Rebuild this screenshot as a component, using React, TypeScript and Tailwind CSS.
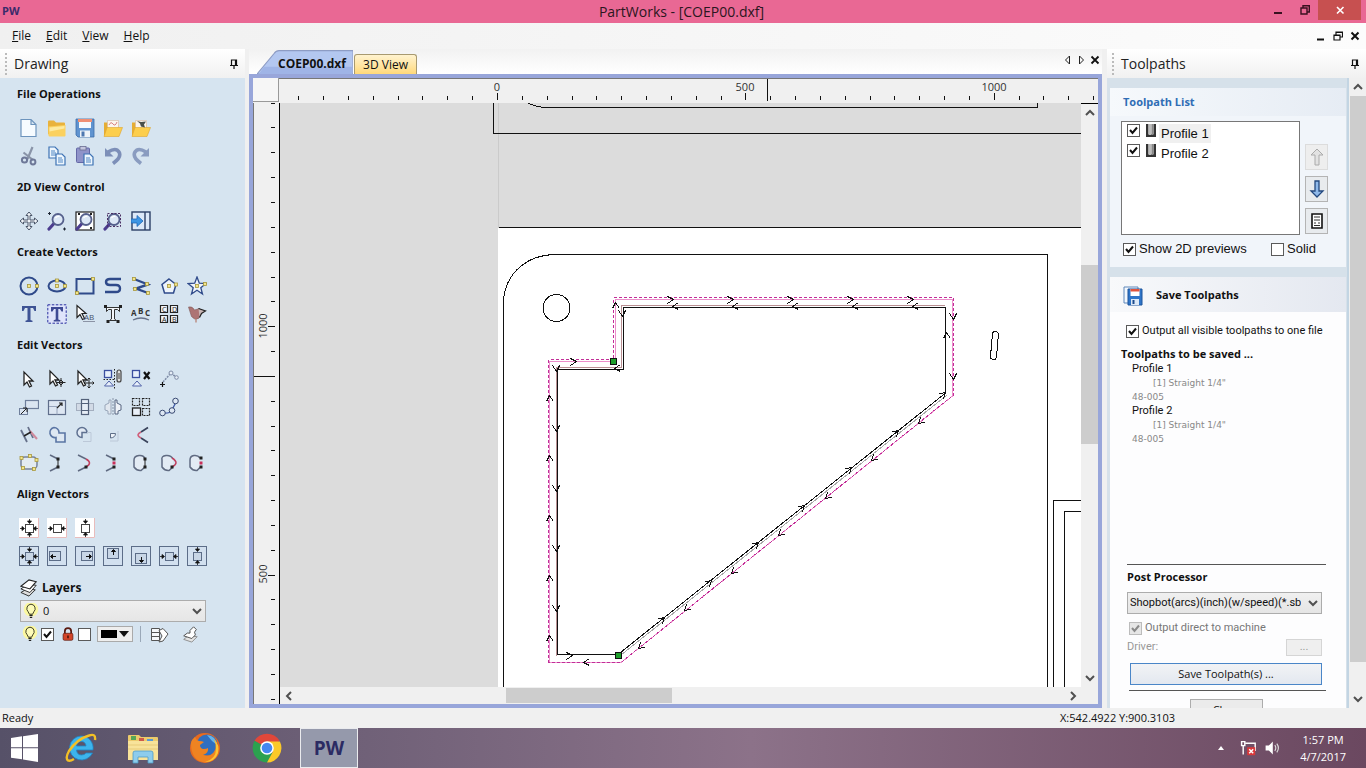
import { useState } from 'react'
import type { ReactNode } from 'react'
import clsx from 'clsx'

interface Tool {
  name: string
  art: ReactNode
}

interface Toolpath {
  id: number
  name: string
  tool: string
  code: string
}

const NAVY = '#2f4a8a'
const INK = '#1d2433'
const SLATE = '#6f7f9c'

const TOOLPATHS: Toolpath[] = [
  { id: 1, name: 'Profile 1', tool: '[1] Straight 1/4"', code: '48-005' },
  { id: 2, name: 'Profile 2', tool: '[1] Straight 1/4"', code: '48-005' },
]

/* ---------- icon pieces ---------- */

const cursor = (
  <path d="M3 2v13l3-3 2.500 5 2-1-2.500-5h4z" fill="#fff" stroke="#222" strokeWidth="1.300" />
)

const folder = (
  <>
    <path d="M1 3.500q0-1 1-1h5l2 2h8q1 0 1 1v11H2q-1 0-1-1z" fill="#e9b23c" />
    <path d="M1.500 8.500l17-1.500v10.500q0 1-1 1h-15q-1 0-1-1z" fill="#fbd160" />
    <path d="M2.500 9.500l15-1.500v2.500l-15 3z" fill="#fdeaa0" />
  </>
)

const openFolder = (
  <>
    <path d="M1 4.500h5l1.500 2h8v11H1z" fill="#e5ad35" />
    <path d="M4.500 2.500h11v9h-11z" fill="#fbf5ee" stroke="#d8b9a0" strokeWidth=".6" />
    <path d="M4 9.500h15.500L16 18.500H1z" fill="#fcce4d" stroke="#dfa52e" strokeWidth=".6" />
  </>
)

const page = (x: number, y: number) => (
  <>
    <path d={`M${x} ${y}h6l3 3v8h-9z`} fill="#eef6fd" stroke="#3d72b4" strokeWidth="1.200" />
    <path d={`M${x + 2} ${y + 4}h4M${x + 2} ${y + 6}h5M${x + 2} ${y + 8}h5`} stroke="#4f86c4" strokeWidth="1" />
  </>
)

const lens = (
  <>
    <path d="M7 12.500L2 18" stroke="#4c3d8f" strokeWidth="3.200" strokeLinecap="round" />
    <circle cx="11" cy="8.500" r="5.500" fill="#dde8f6" stroke="#56608c" strokeWidth="1.800" />
    <path d="M8.500 7q1.500-2 4-1.500" stroke="#fff" strokeWidth="1.300" fill="none" />
  </>
)

const node = (x: number, y: number) => (
  <rect x={x - 1.5} y={y - 1.5} width="3" height="3" fill="#f3e58a" stroke="#a7973e" strokeWidth=".8" />
)

const dot = (x: number, y: number, fill = '#222') => <rect x={x - 1.5} y={y - 1.5} width="3" height="3" fill={fill} />

const arrowsH = (
  <path d="M1 10.500h3M19 10.500h-3M3 8.500l2.500 2L3 12.500zM17 8.500l-2.500 2 2.500 2z" fill="#111" stroke="#111" strokeWidth=".8" />
)
const arrowsV = (
  <path d="M10.500 1v3M10.500 19v-3M8.500 3l2 2.500 2-2.500zM8.500 17l2-2.500 2 2.500z" fill="#111" stroke="#111" strokeWidth=".8" />
)

const pinkTile = (
  <>
    <rect width="20" height="20" fill="#fff" />
    <path d="M19.500 0v19.500H0" stroke="#e9bcbc" fill="none" />
    <rect x="6.500" y="6.500" width="8" height="8" fill="#fff" stroke="#444" />
  </>
)

const frame = <rect x=".5" y=".5" width="19" height="19" fill="#d2e0ef" stroke="#5c6d88" />

/* ---------- tool palettes ---------- */

const FILE_TOOLS: Tool[] = [
  {
    name: 'New',
    art: <path d="M2 1.500h10l5 5v12H2zM12 1.500v5h5" fill="#f6fbff" stroke="#6d94bd" strokeWidth="1.200" />,
  },
  { name: 'Open', art: folder },
  {
    name: 'Save',
    art: (
      <>
        <path d="M1 1h18v18H3l-2-2z" fill="#5f93d0" stroke="#3d6ca8" strokeWidth=".8" />
        <rect x="4" y="1" width="12" height="9" fill="#f5f9fd" />
        <rect x="3" y="1" width="14" height="3" fill="#ef8f74" />
        <rect x="5" y="12.500" width="10" height="6.500" fill="#eef3f9" />
        <rect x="6.500" y="13.500" width="3" height="5" fill="#4e78b0" />
      </>
    ),
  },
  {
    name: 'Import vectors',
    art: (
      <>
        {openFolder}
        <path d="M6 7q2-4 4-1t4-2" stroke="#d98484" fill="none" />
      </>
    ),
  },
  {
    name: 'Import bitmap',
    art: (
      <>
        {openFolder}
        <path d="M6 3l4 1 5-.5-2 3 1 3-4-1-1-3z" fill="#4a4f4a" />
      </>
    ),
  },
  {
    name: 'Cut',
    art: (
      <>
        <path d="M13.500 1L8.500 13M4.500 6.500L14 14" stroke="#8a94a8" strokeWidth="2.200" />
        <circle cx="5.500" cy="14" r="2.600" fill="none" stroke="#6e7898" strokeWidth="2" />
        <circle cx="14" cy="16" r="2.400" fill="none" stroke="#6e7898" strokeWidth="2" />
      </>
    ),
  },
  {
    name: 'Copy',
    art: (
      <>
        {page(2, 1)}
        {page(9, 8)}
      </>
    ),
  },
  {
    name: 'Paste',
    art: (
      <>
        <rect x="1.500" y="2" width="13" height="14.500" rx="1" fill="#8f93c9" stroke="#6468a6" />
        <rect x="5" y=".5" width="6" height="3.500" fill="#c4c6de" stroke="#6a6d92" strokeWidth=".8" />
        {page(9, 8)}
      </>
    ),
  },
  {
    name: 'Undo',
    art: (
      <>
        <path d="M5 6q8-5 11 0t-6 11.500" fill="none" stroke="#7d8fb8" strokeWidth="3.600" />
        <path d="M2 2v8.500h8.500z" fill="#7d8fb8" />
      </>
    ),
  },
  {
    name: 'Redo',
    art: (
      <>
        <path d="M15 6Q7 1 4 6t6 11.500" fill="none" stroke="#8a9cc0" strokeWidth="3.600" />
        <path d="M18 2v8.500H9.500z" fill="#8a9cc0" />
      </>
    ),
  },
]

const VIEW_TOOLS: Tool[] = [
  {
    name: 'Pan',
    art: (
      <path
        d="M10 1l3 3.500h-2v4.500h4.500V7l3.500 3-3.500 3v-2H11v4.500h2L10 19l-3-3.500h2V11H4.500v2L1 10l3.500-3v2H9V4.500H7z"
        fill="#f2f5f9"
        stroke="#4a5568"
        strokeWidth="1"
      />
    ),
  },
  {
    name: 'Zoom in',
    art: (
      <>
        {lens}
        <path d="M1 2.500h3M2.500 1v3M16 18h3M17.500 16.500v3" stroke={INK} />
      </>
    ),
  },
  {
    name: 'Zoom to fit',
    art: (
      <>
        <rect x="1" y="1" width="18" height="18" fill="#fff" stroke="#222" strokeWidth="1.200" />
        {lens}
        <path d="M3 3h2M15 3h2M15 17h2" stroke="#222" strokeWidth="2" />
      </>
    ),
  },
  {
    name: 'Zoom selected',
    art: (
      <>
        {lens}
        <rect x="4.500" y="2.500" width="13" height="13" fill="none" stroke="#4a2f63" strokeDasharray="2 1.500" />
      </>
    ),
  },
  {
    name: 'Switch view',
    art: (
      <>
        <rect x="1" y="1" width="18" height="18" fill="#dce8f8" stroke="#2b3f66" strokeWidth="1.400" />
        <path d="M14 1v18" stroke="#2b3f66" strokeWidth="1.400" />
        <path d="M0 8h6V4.500l6 5.500-6 5.500V12H0z" fill="#3d95e4" stroke="#1f66b4" strokeWidth=".8" />
      </>
    ),
  },
]

const CREATE_TOOLS: Tool[] = [
  {
    name: 'Circle',
    art: (
      <>
        <circle cx="10" cy="10" r="8.500" fill="none" stroke={NAVY} strokeWidth="2" />
        {node(10, 10)}
        {node(18, 10)}
      </>
    ),
  },
  {
    name: 'Ellipse',
    art: (
      <>
        <ellipse cx="10" cy="10" rx="8.500" ry="5.500" fill="none" stroke={NAVY} strokeWidth="2" />
        {node(10, 10)}
        {node(18, 10)}
        {node(10, 4.500)}
      </>
    ),
  },
  {
    name: 'Rectangle',
    art: (
      <>
        <rect x="1.500" y="3" width="17" height="14.500" fill="none" stroke={NAVY} strokeWidth="2" />
        {node(18, 3)}
        {node(2, 17)}
      </>
    ),
  },
  {
    name: 'Polyline',
    art: <path d="M18 3H7q-4 0-4 3t4 3h6q4 0 4 3.500T13 16H2" fill="none" stroke={NAVY} strokeWidth="2.400" />,
  },
  {
    name: 'Arcs',
    art: (
      <>
        <path d="M3 3l14 5.500-12 4 12 4.500" fill="none" stroke={NAVY} strokeWidth="2.400" />
        {node(3, 3)}
        {node(16, 8)}
        {node(4, 13)}
        {node(17, 17)}
      </>
    ),
  },
  {
    name: 'Polygon',
    art: (
      <>
        <path d="M10 3l7 5.500L14.500 17h-9L3 8.500z" fill="#eef4fb" stroke={NAVY} strokeWidth="1.500" />
        {node(10, 10)}
        {node(17, 8.5)}
      </>
    ),
  },
  {
    name: 'Star',
    art: (
      <>
        <path d="M10 1l2.300 6.200 6.700.3-5.200 4.200L15.500 18 10 14.300 4.500 18l1.700-6.300L1 7.500l6.700-.3z" fill="#eef4fb" stroke={NAVY} strokeWidth="1.300" />
        {node(10, 10)}
        {node(18, 8)}
      </>
    ),
  },
  {
    name: 'Text',
    art: <path d="M3 2h14v5h-1.500L14 4h-2.500v12l2 .8V18h-7v-1.200l2-.8V4H6L4.500 7H3z" fill="#3e5394" />,
  },
  {
    name: 'Text in box',
    art: (
      <>
        <rect x=".8" y=".8" width="18.400" height="18.400" fill="#dfe4fb" stroke="#2a2fa0" strokeDasharray="2.500 1.500" />
        <path d="M4 3h12v4.500h-1.500L13 5h-1.700v10.500l2 .7v1.300H6.700v-1.300l2-.7V5H7L5.500 7.500H4z" fill="#3e4a94" />
      </>
    ),
  },
  {
    name: 'Edit text',
    art: (
      <>
        <path d="M2 1.500v12l3-3 2.500 5 2-1-2.500-5h4z" fill="#fff" stroke="#222" strokeWidth="1.200" />
        <text x="9" y="16" className="text-[8px]" fill="#44506a">AB</text>
        <path d="M8 17.500h12" stroke="#8b93a5" />
      </>
    ),
  },
  {
    name: 'Convert text',
    art: (
      <>
        <path d="M3.500 3.500h13v4l-2-2H11.500V15l2 1.500h-7L8.500 15V5.500h-3l-2 2z" fill="#f4f7fb" stroke="#333" />
        {dot(2.5, 2.5)}
        {dot(17.5, 2.5)}
        {dot(5, 17.5)}
        {dot(15, 17.5)}
      </>
    ),
  },
  {
    name: 'Text on curve',
    art: (
      <>
        <text x="0" y="12" className="text-[8px] font-bold" fill="#333">A</text>
        <text x="7" y="10" className="text-[8px] font-bold" fill="#333">B</text>
        <text x="14" y="12" className="text-[8px] font-bold" fill="#333">C</text>
        <path d="M2 16q8-4 16 0" fill="none" stroke="#66718a" strokeWidth="1.300" />
      </>
    ),
  },
  {
    name: 'Nesting',
    art: (
      <>
        <path d="M1.500 1.500h7v7h-7zM11.500 1.500h7v7h-7zM1.500 11.500h7v7h-7zM11.500 11.500h7v7h-7z" fill="#f3f6fa" stroke="#222" strokeWidth="1.200" />
        <text x="3" y="8" className="text-[7px]" fill="#222">C</text>
        <text x="13" y="8" className="text-[7px]" fill="#222">D</text>
        <text x="3" y="18" className="text-[7px]" fill="#222">A</text>
        <text x="13" y="18" className="text-[7px]" fill="#222">B</text>
      </>
    ),
  },
  {
    name: 'Trace bitmap',
    art: (
      <>
        <path d="M1.500 3q4-1 6 3l5-1.500 3 3-4 7q-4 2-7-2z" fill="#ad7474" stroke="#7e5a5a" strokeWidth=".6" />
        <path d="M11.500 4.500l7 2.500-4 2.500-2 4" fill="#c9b5b5" stroke="#222" strokeWidth="1.200" />
        <path d="M9 14v4.500" stroke="#b47a6c" strokeWidth="1.200" />
      </>
    ),
  },
]

const EDIT_TOOLS: Tool[][] = [
  [
    {
      name: 'Select',
      art: <g transform="translate(2 1)">{cursor}</g>,
    },
    {
      name: 'Node edit',
      art: (
        <>
          {cursor}
          <path d="M14 9v9M9.500 13.500h9M14 11l2.500 2.500L14 16l-2.500-2.500z" fill="#fff" stroke="#222" />
        </>
      ),
    },
    {
      name: 'Transform',
      art: (
        <>
          {cursor}
          <path d="M14 9v10M9 14h10M12.500 10.500L14 9l1.500 1.500M12.500 17.500L14 19l1.500-1.500M10.500 12.500L9 14l1.500 1.500M17.500 12.500L19 14l-1.500 1.500" fill="none" stroke="#222" />
        </>
      ),
    },
    {
      name: 'Group',
      art: (
        <>
          <rect x="1.500" y="1.500" width="7" height="7" fill="#e8f0fb" stroke="#3b4fa0" strokeWidth="1.300" />
          <path d="M6 12l4.500 5h-9z" fill="#e8f0fb" stroke="#5062a8" />
          <path d="M.5 10.500h11M11.500 0v20" stroke="#222" strokeDasharray="1.500 1.500" />
          <rect x="14" y="1" width="4" height="12" rx="2" fill="#ddd" stroke="#444" strokeWidth="1.200" />
          <path d="M16 4v6" stroke="#444" />
        </>
      ),
    },
    {
      name: 'Ungroup',
      art: (
        <>
          <rect x="1.500" y="1.500" width="7" height="7" fill="#e8f0fb" stroke="#3b4fa0" strokeWidth="1.300" />
          <path d="M6 12l4.500 5h-9z" fill="#e8f0fb" stroke="#5062a8" />
          <path d="M13 3l5.500 7M18.500 3L13 10" stroke="#111" strokeWidth="2.200" />
        </>
      ),
    },
    {
      name: 'Measure',
      art: (
        <>
          <path d="M1 15.500h5M3.500 13v5" stroke="#111" strokeWidth="1.200" />
          <path d="M4 13L12 4l6 5" fill="none" stroke="#7d8aa5" strokeWidth="1.500" strokeDasharray="2 1" />
          <circle cx="12" cy="4" r="2" fill="#e6edf6" stroke="#7d8aa5" />
          <circle cx="17.500" cy="8.500" r="1.800" fill="#e6edf6" stroke="#7d8aa5" />
        </>
      ),
    },
  ],
  [
    {
      name: 'Move',
      art: (
        <>
          <rect x="6.500" y="3.500" width="13" height="8" fill="#dbe5f1" stroke={SLATE} strokeWidth="1.200" />
          <rect x=".5" y="11.500" width="8" height="6" fill="#dbe5f1" stroke={SLATE} />
          <path d="M2 17L8 11M4 11h4v4" fill="none" stroke="#222" />
        </>
      ),
    },
    {
      name: 'Set size',
      art: (
        <>
          <rect x="1.500" y="3.500" width="17" height="14" fill="#dde6f2" stroke="#5f6e8b" strokeWidth="1.200" />
          <path d="M2 9.500h8v8" fill="none" stroke="#97a4bb" />
          <path d="M10 11l5-5M12 6h3v3" fill="none" stroke="#222" strokeWidth="1.200" />
        </>
      ),
    },
    {
      name: 'Rotate',
      art: (
        <>
          <rect x="1.500" y="6.500" width="17" height="7" fill="#d2dae6" stroke="#a3aebf" />
          <rect x="6.500" y="2.500" width="7" height="15" fill="#e6edf6" stroke="#526079" strokeWidth="1.200" />
          <path d="M7 6.500h6M7 13.500h6" stroke="#526079" />
        </>
      ),
    },
    {
      name: 'Mirror',
      art: (
        <>
          <path d="M8 3H6v3L2 8v5l3 1v3h3z" fill="#e1e7ef" stroke="#9aa7ba" />
          <path d="M12 3h2v3l4 2v5l-3 1v3h-3z" fill="#eef2f8" stroke="#566480" />
          <path d="M10 1v18" stroke="#8894a8" strokeDasharray="2 1" />
        </>
      ),
    },
    {
      name: 'Array copy',
      art: (
        <>
          <path d="M1.500 1.500h7v7h-7zM11.500 1.500h7v7h-7zM11.500 11.500h7v7h-7z" fill="none" stroke="#222" strokeDasharray="2 1" strokeWidth="1.200" />
          <rect x="1.500" y="11" width="8" height="7.500" fill="#eaf0f8" stroke="#222" strokeWidth="1.300" />
        </>
      ),
    },
    {
      name: 'Copy along vector',
      art: (
        <>
          <path d="M3 16q8 1 10-3l4-8" fill="none" stroke="#3d57a5" strokeWidth="1.300" />
          <circle cx="3.500" cy="16" r="2.800" fill="#dde7f3" stroke="#3a4a72" />
          <circle cx="13" cy="13.500" r="2.800" fill="#dde7f3" stroke="#3a4a72" />
          <circle cx="16.500" cy="4" r="2.800" fill="#dde7f3" stroke="#3a4a72" />
        </>
      ),
    },
  ],
  [
    {
      name: 'Offset',
      art: (
        <>
          <path d="M2 5l6 12M9 2l5 11" stroke="#66708a" strokeWidth="1.800" />
          <path d="M11 6l7 8" stroke="#cf8a9c" strokeWidth="2" />
          <path d="M5 11l7-4" stroke="#222" strokeWidth="1.500" />
        </>
      ),
    },
    {
      name: 'Weld',
      art: <path d="M7 2.500a5 5 0 0 1 5 5v.5h6v9h-9v-4.500A5 5 0 1 1 7 2.500z" fill="#dde7f2" stroke="#5a75a4" strokeWidth="1.600" />,
    },
    {
      name: 'Subtract',
      art: (
        <>
          <path d="M12 7.500A5 5 0 1 0 7 12.500V7.500z" fill="#e2eaf4" stroke="#5f7191" strokeWidth="1.500" />
          <path d="M12 7.500h4v9H8" fill="none" stroke="#bcc8d8" />
        </>
      ),
    },
    {
      name: 'Intersect',
      art: (
        <>
          <path d="M7.500 8.500h5q0 4-5 4.500z" fill="#eef3f9" stroke="#5f6f88" />
          <path d="M15 6v10H7" fill="none" stroke="#bcc8d8" />
        </>
      ),
    },
    {
      name: 'Fillet',
      art: (
        <>
          <path d="M17 2.500L10 7M17 17.500L10 13" stroke="#39425a" strokeWidth="1.700" />
          <path d="M10 7q-6 3 0 6" fill="none" stroke="#d0607c" strokeWidth="1.700" />
        </>
      ),
    },
  ],
  [
    {
      name: 'Fit curves',
      art: (
        <>
          <rect x="2" y="4" width="16" height="12" rx="4" fill="#e3ebf2" stroke="#77829a" strokeWidth="1.500" />
          {node(2.5, 5)}
          {node(11, 3)}
          {node(17.5, 7)}
          {node(4, 15)}
          {node(15, 16)}
        </>
      ),
    },
    {
      name: 'Join with line',
      art: (
        <>
          <path d="M3 2l8 4M3 18l8-4" stroke="#606b82" strokeWidth="1.500" />
          <path d="M11 6v8" stroke="#222" />
          {dot(11, 6)}
          {dot(11, 14)}
        </>
      ),
    },
    {
      name: 'Join with curve',
      art: (
        <>
          <path d="M3 2l8 4M3 18l8-4" stroke="#606b82" strokeWidth="1.500" />
          <path d="M11 6q7 4 0 8" fill="none" stroke="#c0405e" strokeWidth="1.500" />
          {dot(11, 14)}
        </>
      ),
    },
    {
      name: 'Join at point',
      art: (
        <>
          <path d="M3 2l8 4M3 18l8-4" stroke="#606b82" strokeWidth="1.500" />
          {dot(11, 6)}
          {dot(11, 10, '#c9305a')}
          {dot(11, 14)}
        </>
      ),
    },
    {
      name: 'Close with line',
      art: (
        <>
          <path d="M14 6Q13 2 8 2.500T3 7v7q3 4 7 3.500l4-3.500" fill="#e3ebf4" stroke="#606b82" strokeWidth="1.500" />
          <path d="M14 6v8" stroke="#222" />
          {dot(14, 6)}
          {dot(14, 14)}
        </>
      ),
    },
    {
      name: 'Close with curve',
      art: (
        <>
          <path d="M14 6Q12 2 7 2.500T3 7v7q3 4 7 3.500l4-3.500" fill="#e3ebf4" stroke="#606b82" strokeWidth="1.500" />
          <path d="M13 5q8 5 0 9" fill="none" stroke="#c0405e" strokeWidth="1.500" />
          {dot(13, 14)}
        </>
      ),
    },
    {
      name: 'Close at point',
      art: (
        <>
          <path d="M13 5Q11 2 7 2.500T3 7v7q3 4 7 3.500l3-3" fill="#e3ebf4" stroke="#606b82" strokeWidth="1.500" />
          {dot(14, 5)}
          {dot(14, 10, '#c9305a')}
          {dot(14, 14)}
        </>
      ),
    },
  ],
]

const ALIGN_TOOLS: Tool[][] = [
  [
    { name: 'Center both', art: <>{pinkTile}{arrowsH}{arrowsV}</> },
    { name: 'Center horizontally', art: <>{pinkTile}{arrowsH}</> },
    { name: 'Center vertically', art: <>{pinkTile}{arrowsV}</> },
  ],
  [
    { name: 'Center in material', art: <>{frame}<rect x="6.500" y="6.500" width="8" height="8" fill="#c8d6e6" stroke="#5c6d88" />{arrowsH}{arrowsV}</> },
    { name: 'Align left', art: <>{frame}<rect x="2.500" y="5.500" width="11" height="9" fill="#c8d6e6" stroke="#5c6d88" /><path d="M9 10.500H5M5.500 8.500l-2 2 2 2z" stroke="#111" fill="#111" /></> },
    { name: 'Align right', art: <>{frame}<rect x="6.500" y="5.500" width="11" height="9" fill="#c8d6e6" stroke="#5c6d88" /><path d="M11 10.500h4M14.500 8.500l2 2-2 2z" stroke="#111" fill="#111" /></> },
    { name: 'Align top', art: <>{frame}<rect x="4.500" y="2.500" width="11" height="10" fill="#c8d6e6" stroke="#5c6d88" /><path d="M10.500 9V5M8.500 5.500l2-2 2 2z" stroke="#111" fill="#111" /></> },
    { name: 'Align bottom', art: <>{frame}<rect x="4.500" y="7.500" width="11" height="10" fill="#c8d6e6" stroke="#5c6d88" /><path d="M10.500 11v4M8.500 14.500l2 2 2-2z" stroke="#111" fill="#111" /></> },
    { name: 'Align middle horizontally', art: <>{frame}<rect x="6.500" y="6.500" width="8" height="8" fill="#c8d6e6" stroke="#5c6d88" />{arrowsH}</> },
    { name: 'Align middle vertically', art: <>{frame}<rect x="6.500" y="6.500" width="8" height="8" fill="#c8d6e6" stroke="#5c6d88" />{arrowsV}</> },
  ],
]

/* ---------- small shared parts ---------- */

function Icon({ children, className = 'size-5' }: { children: ReactNode; className?: string }) {
  return (
    <svg viewBox="0 0 20 20" className={clsx('block shrink-0', className)} aria-hidden="true">
      {children}
    </svg>
  )
}

function Bulb() {
  return (
    <Icon className="size-4">
      <circle cx="10" cy="8" r="9" fill="#fbf8a0" />
      <path d="M10 1.500a5.500 5.500 0 0 1 3.500 9.500l-1.500 3H8l-1.500-3A5.500 5.500 0 0 1 10 1.500z" fill="#fdfbb8" stroke="#3a3a20" strokeWidth="1.200" />
      <path d="M8 15.500h4M8.500 18h3" stroke="#222" strokeWidth="1.800" />
    </Icon>
  )
}

function Pin() {
  return (
    <svg viewBox="0 0 10 10" className="block size-2.5" aria-hidden="true">
      <path d="M2.500 6V1h5v5M1 6.500h8M5 7v3M6.500 1v5" fill="none" stroke="#111" strokeWidth="1.200" />
    </svg>
  )
}

function Chevron({ d }: { d: string }) {
  return (
    <svg viewBox="0 0 10 10" className="size-2.5 shrink-0" aria-hidden="true">
      <path d={d} fill="none" stroke="#505050" strokeWidth="2" />
    </svg>
  )
}

function TabArrow({ d }: { d: string }) {
  return (
    <svg viewBox="0 0 10 10" className="size-2.5 shrink-0" aria-hidden="true">
      <path d={d} fill="none" stroke="#222" />
    </svg>
  )
}

const UP = 'M1 7l4-4 4 4'
const DOWN = 'M1 3l4 4 4-4'

interface CheckProps {
  id: string
  label?: string
  hiddenLabel?: string
  initial?: boolean
  disabled?: boolean
  className?: string
}

function Check({ id, label, hiddenLabel, initial = false, disabled = false, className = '' }: CheckProps) {
  const [on, setOn] = useState(initial)
  return (
    <div className={clsx('flex items-center gap-[3px]', className)}>
      <span className="relative block size-[13px] shrink-0">
        <input
          id={id}
          type="checkbox"
          checked={on}
          disabled={disabled}
          aria-label={hiddenLabel}
          onChange={(e) => setOn(e.target.checked)}
          className="block size-[13px] appearance-none border border-[#5a5a5a] bg-white disabled:border-[#bcbcbc] disabled:bg-[#e6e6e6]"
        />
        {on && (
          <svg viewBox="0 0 13 13" className="pointer-events-none absolute inset-0" aria-hidden="true">
            <path d="M3 6l2.500 3L10 3.500" fill="none" stroke={disabled ? '#8a8a8a' : '#111'} strokeWidth="2" />
          </svg>
        )}
      </span>
      {label && <label htmlFor={id} className="whitespace-nowrap">{label}</label>}
    </div>
  )
}

function Palette({ tools }: { tools: Tool[] }) {
  return (
    <div className="flex">
      {tools.map((tool) => (
        <button key={tool.name} type="button" title={tool.name} aria-label={tool.name} className="grid size-7 place-items-center">
          <Icon>{tool.art}</Icon>
        </button>
      ))}
    </div>
  )
}

function Section({ title, rows }: { title: string; rows: Tool[][] }) {
  return (
    <section>
      <h2 className="mb-2.5 pl-0.5 text-[11px] leading-5 font-bold">{title}</h2>
      {rows.map((tools) => (
        <Palette key={tools[0].name} tools={tools} />
      ))}
    </section>
  )
}

function PanelHeader({ title }: { title: string }) {
  return (
    <header className="flex h-[29px] shrink-0 items-center bg-linear-to-b from-white to-[#f1f1f1] pr-1.5 pl-[5px]">
      <span className="mr-[7px] h-[22px] border-l-2 border-dotted border-[#bbb]" />
      <h1 className="flex-1 text-[14px] text-[#222]">{title}</h1>
      <button type="button" aria-label={`Pin ${title}`}>
        <Pin />
      </button>
    </header>
  )
}

/* ---------- window chrome ---------- */

function TitleBar() {
  return (
    <div className="flex h-[23px] shrink-0 bg-[#e96894]">
      <div className="flex flex-1 items-center pl-0.5 text-[11px] font-bold text-[#3b2a6b]">PW</div>
      <div className="text-[14px] leading-[23px] text-[#2b1620]">PartWorks - [COEP00.dxf]</div>
      <div className="flex flex-1 items-start justify-end pr-[5px]">
        <button type="button" aria-label="Minimize" className="grid h-5 w-[26px] place-items-center">
          <svg viewBox="0 0 10 10" className="size-2.5"><path d="M1 8h8" stroke="#3a1020" strokeWidth="2" /></svg>
        </button>
        <button type="button" aria-label="Restore" className="grid h-5 w-[27px] place-items-center">
          <svg viewBox="0 0 10 10" className="size-2.5"><path d="M1 3h6v6H1zM3 3V.7h6.300V7H7" fill="none" stroke="#3a1020" strokeWidth="1.400" /></svg>
        </button>
        <button type="button" aria-label="Close" className="grid h-5 w-[43px] place-items-center bg-[#c75050]">
          <svg viewBox="0 0 10 10" className="size-2.5"><path d="M2 2l6.500 6.500M8.500 2L2 8.500" stroke="#fff" strokeWidth="1.600" /></svg>
        </button>
      </div>
    </div>
  )
}

function MenuBar() {
  return (
    <nav className="flex h-[26px] shrink-0 items-center bg-linear-to-r from-[#f0f0f0] to-[#fcfcfc] pr-1.5 pl-3 text-[12px]">
      <div className="flex flex-1 gap-[15px]">
        {['File', 'Edit', 'View', 'Help'].map((item) => (
          <button key={item} type="button">
            <span className="underline">{item[0]}</span>
            {item.slice(1)}
          </button>
        ))}
      </div>
      <div className="flex items-center gap-[7px]">
        <button type="button" aria-label="Minimize document">
          <svg viewBox="0 0 10 10" className="size-2.5"><path d="M1 8.500h7" stroke="#111" strokeWidth="2" /></svg>
        </button>
        <button type="button" aria-label="Restore document">
          <svg viewBox="0 0 10 10" className="size-2.5"><path d="M1 4h6v5H1zM3 4V1h6.500v5H7M1 4.500h6M3 1.500h6" fill="none" stroke="#111" strokeWidth="1.200" /></svg>
        </button>
        <button type="button" aria-label="Close document">
          <svg viewBox="0 0 10 10" className="size-2.5"><path d="M1.500 1.500l7 7M8.500 1.500l-7 7" stroke="#111" strokeWidth="2" /></svg>
        </button>
      </div>
    </nav>
  )
}

/* ---------- left panel ---------- */

function DrawingPanel() {
  return (
    <aside className="flex w-[249px] shrink-0 flex-col pr-1">
      <PanelHeader title="Drawing" />
      <div className="flex flex-1 flex-col gap-[7px] overflow-hidden bg-[#d6e4f0] pt-1.5 pl-[15px]">
        <Section title="File Operations" rows={[FILE_TOOLS.slice(0, 5), FILE_TOOLS.slice(5)]} />
        <Section title="2D View Control" rows={[VIEW_TOOLS]} />
        <Section title="Create Vectors" rows={[CREATE_TOOLS.slice(0, 7), CREATE_TOOLS.slice(7)]} />
        <Section title="Edit Vectors" rows={EDIT_TOOLS} />
        <Section title="Align Vectors" rows={ALIGN_TOOLS} />
        <section className="w-[191px] pl-[5px]">
          <h2 className="mb-px flex h-[22px] items-center gap-1 text-[12px] font-bold">
            <Icon className="size-[18px]">
              <path d="M1 15l7-4 9 1-7 7z" fill="#ddd" stroke="#222" />
              <path d="M1 11l8-5 9 1-7 8z" fill="#fff" stroke="#222" />
              <path d="M1 8l9-7 8 2-7 8z" fill="#fff" stroke="#222" strokeWidth="1.200" />
            </Icon>
            Layers
          </h2>
          <div className="relative h-[22px]">
            <select aria-label="Active layer" className="block h-full w-full appearance-none border border-[#acacac] bg-linear-to-b from-[#efefef] to-[#e6e6e6] pl-[22px] text-[11px]">
              <option>0</option>
            </select>
            <span className="pointer-events-none absolute inset-y-0 left-[3px] flex items-center"><Bulb /></span>
            <span className="pointer-events-none absolute inset-y-0 right-1 flex items-center"><Chevron d={DOWN} /></span>
          </div>
          <div className="mt-1 flex h-4 items-center pl-0.5">
            <Bulb />
            <Check id="layer-visible" hiddenLabel="Layer visible" initial className="ml-[3px]" />
            <Icon className="ml-[7px] size-3.5">
              <path d="M5.500 10V6a4.500 4.500 0 0 1 9 0v4" fill="none" stroke="#5b1a10" strokeWidth="2.500" />
              <rect x="3" y="9" width="14" height="10" rx="2" fill="#d3452a" stroke="#5b1a10" />
              <path d="M10 12v4" stroke="#3a0e08" strokeWidth="2" />
            </Icon>
            <Check id="layer-locked" hiddenLabel="Layer locked" className="ml-[3px]" />
            <button type="button" aria-label="Layer colour" className="ml-1.5 flex h-4 w-9 items-center justify-between border border-[#aaa] bg-[#eee] px-[3px]">
              <span className="h-2 w-4 bg-black" />
              <svg viewBox="0 0 10 10" className="size-2.5"><path d="M0 2h10L5 8z" fill="#111" /></svg>
            </button>
            <span className="mr-2 ml-[7px] h-4 shrink-0 border-l border-[#9aa8b8]" />
            <button type="button" aria-label="Layer manager" className="mr-3">
              <Icon>
                <path d="M2.500 4.500h8v12h-8zM3 8.500h7M3 12.500h7" fill="#f6f8fa" stroke="#555" />
                <path d="M10 6.500l4-2 5 5.500-5 7-4 1 3-6z" fill="#fff" stroke="#555" />
              </Icon>
            </button>
            <button type="button" aria-label="Move to layer">
              <Icon className="size-[18px]">
                <path d="M3 16l5-4 10 1-6 6z" fill="#e4e4e4" stroke="#888" />
                <path d="M3 12l4-3h3V6l4-4 3 3-2 3 1 3-4 4z" fill="#fff" stroke="#444" />
              </Icon>
            </button>
          </div>
        </section>
      </div>
    </aside>
  )
}

/* ---------- document window ---------- */

// One ruler step is 50 drawing units; 500 units take 248px on the sheet.
const STEPS = Array.from({ length: 64 }, (_, i) => i - 30)
const stepAt = (origin: number, i: number, sign: number) => Math.round(origin + sign * i * 24.84) + 0.5

function TopRuler() {
  return (
    <svg className="block h-6 w-full bg-[#f0f0f0]" aria-label="Horizontal ruler">
      <g transform="translate(-280 -78)" stroke="#111">
        {STEPS.map((i) => {
          const x = stepAt(497, i, 1)
          return <path key={i} d={i % 10 === 0 ? `M${x} 92v7` : `M${x} 95v4`} />
        })}
        <path d="M767.5 78v22" />
      </g>
      <g fill="#333" textAnchor="middle" className="text-[11px]">
        <text x="217" y="12">0</text>
        <text x="465" y="12">500</text>
        <text x="714" y="12">1000</text>
      </g>
    </svg>
  )
}

function SideRuler() {
  return (
    <svg className="block h-full w-6 shrink-0 bg-[#f0f0f0]" aria-label="Vertical ruler">
      <g transform="translate(-254 -103)" stroke="#111">
        {STEPS.map((i) => {
          const y = stepAt(823, i, -1)
          return <path key={i} d={i % 10 === 0 ? `M268 ${y}h7` : `M271 ${y}h4`} />
        })}
        <path d="M254 376.500h17" />
      </g>
      <g fill="#333" textAnchor="middle" className="text-[11px]">
        <text transform="translate(13 223) rotate(-90)">1000</text>
        <text transform="translate(13 471) rotate(-90)">500</text>
      </g>
    </svg>
  )
}

// tip x, tip y, heading in degrees
const ARROWS: [number, number, number][] = [
  [673, 299, 0], [733, 299, 0], [793, 299, 0], [853, 299, 0], [913, 299, 0],
  [672, 306, 180], [732, 306, 180], [792, 306, 180], [852, 306, 180], [912, 306, 180],
  [549, 395, 270], [549, 455, 270], [549, 515, 270], [549, 575, 270], [549, 635, 270],
  [556, 371, 90], [556, 431, 90], [556, 491, 90], [556, 551, 90], [556, 611, 90],
  [615, 302, 270], [622, 316, 90], [576, 361, 0], [614, 368, 180],
  [953, 319, 90], [953, 379, 90], [946, 332, 270],
  [945, 392, 321], [898, 430, 321], [851, 467, 321], [804, 505, 321], [758, 542, 321], [711, 580, 321], [664, 617, 321],
  [918, 423, 141], [871, 460, 141], [825, 498, 141], [778, 535, 141], [731, 573, 141], [684, 610, 141], [638, 648, 141],
  [572, 655, 0], [583, 662, 180],
]

function Sheet() {
  return (
    <svg className="block size-full bg-[#dcdcdc]" aria-label="Drawing canvas">
      <g transform="translate(-280 -103)" fill="none" stroke="#111" shapeRendering="crispEdges">
        <path d="M498 228h4000v4000H498z" fill="#fff" stroke="none" />
        <path d="M498.500 103v125" stroke="#cbcbcb" />
        <path d="M499 227.500h4000M493.500 103v30.500h4000M528 103q8 4 16 4.500H1037.500V103" />
        <path d="M503.500 4000V300C506 272 528 254.500 556 254.500H1047.500V4000" />
        <path d="M1053.500 4000V500.500H4000M1064.500 4000V511.500H4000" />
        <circle cx="556.500" cy="308" r="13.500" />
        <rect x="991.500" y="331.500" width="6" height="28" rx="3" transform="rotate(5 994 345)" />

        <path d="M556.500 655.500V367.500H621.500V305.500H944.500" stroke="#b98f92" />
        <path d="M947 395L621 655" stroke="#a9a9a9" />
        <path d="M557.500 654.500V369.500H623.500V307.500H945.500V393L618 654.500z" />
        <path d="M549.500 662V361.500H615.500V299.500H952.500V396L621 662.500H549" stroke="#ec8fcb" />
        <path d="M548.500 662.500V359.500H613.500V297.500H953.500V395L621 662.500z" stroke="#c22e98" strokeDasharray="3 2" />

        {ARROWS.map(([x, y, deg]) => (
          <path key={`${x}-${y}`} d="M-6-3L0 0l-6 4" transform={`translate(${x + 0.5} ${y + 0.5}) rotate(${deg})`} />
        ))}
        <path d="M610.500 358.500h6v6h-6zM615.500 652.500h6v6h-6z" fill="#1fa02c" />
      </g>
    </svg>
  )
}

function DocumentWindow() {
  return (
    <main className="flex min-w-0 flex-1 flex-col">
      <div className="flex h-[25px] shrink-0 items-end bg-linear-to-b from-[#f2f2f2] to-white pr-0.5 pl-2">
        <div className="relative w-24 text-center">
          <svg viewBox="0 0 96 20" preserveAspectRatio="none" className="absolute inset-0 size-full" aria-hidden="true">
            <path d="M0 20L17 3q2-2.500 5-2.500h74V20z" fill="#b3c7f0" stroke="#8d9cc4" />
            <path d="M7 14h88v6H2z" fill="#9fb4e6" />
          </svg>
          <button type="button" className="relative pl-3.5 text-[12px] leading-5 font-bold">COEP00.dxf</button>
        </div>
        <button type="button" className="ml-px h-5 w-[63px] rounded-t-[3px] border border-b-0 border-[#a89a70] bg-linear-to-b from-[#fff3cf] to-[#ffd979] text-[12px] leading-[18px]">
          3D View
        </button>
        <div className="ml-auto flex h-full items-center gap-1 pb-1">
          <button type="button" aria-label="Previous tab"><TabArrow d="M7.500 1v8L3.500 5z" /></button>
          <button type="button" aria-label="Next tab"><TabArrow d="M3.500 1v8l4-4z" /></button>
          <button type="button" aria-label="Close tab">
            <svg viewBox="0 0 10 10" className="size-2.5"><path d="M1.500 1.500l7 7M8.500 1.500l-7 7" stroke="#111" strokeWidth="1.800" /></svg>
          </button>
        </div>
      </div>

      <div className="flex min-h-0 flex-1 flex-col border-4 border-[#98a6da] bg-[#f0f0f0]">
        <div className="flex h-[26px] shrink-0">
          <div className="h-6 w-[26px] shrink-0 border-r border-b border-[#999] bg-[#f6f6f6]" />
          <div className="min-w-0 flex-1 border-t border-b border-t-[#777] border-b-black pl-px">
            <TopRuler />
          </div>
        </div>
        <div className="-mt-px flex min-h-0 flex-1">
          <div className="flex w-[26px] shrink-0 border-l border-[#777]">
            <SideRuler />
          </div>
          <div className="flex min-w-0 flex-1 flex-col border-t border-l border-black">
            <div className="-mt-px flex min-h-0 flex-1 border-t border-black">
              <div className="-mt-px min-w-0 flex-1">
                <Sheet />
              </div>
              <div className="flex w-[17px] shrink-0 flex-col items-center bg-[#f0f0f0] py-1">
                <Chevron d={UP} />
                <div className="h-[147px] shrink-0" />
                <div className="h-[179px] w-full shrink-0 bg-[#cdcdcd]" />
                <div className="flex-1" />
                <Chevron d={DOWN} />
              </div>
            </div>
            <div className="flex h-[17px] shrink-0 items-center pr-5 pl-1">
              <Chevron d="M7 1L3 5l4 4" />
              <div className="ml-[212px] h-[15px] w-[166px] bg-[#cdcdcd]" />
              <div className="flex-1" />
              <Chevron d="M3 1l4 4-4 4" />
            </div>
          </div>
        </div>
      </div>
    </main>
  )
}

/* ---------- right panel ---------- */

function ListButton({ label, disabled = false, children }: { label: string; disabled?: boolean; children: ReactNode }) {
  return (
    <button
      type="button"
      aria-label={label}
      disabled={disabled}
      className="grid h-[26px] w-[23px] place-items-center border border-[#b4b4b4] bg-[#e8ebee] disabled:border-[#dcdcdc] disabled:bg-[#eeeeee]"
    >
      <Icon>{children}</Icon>
    </button>
  )
}

function ToolpathList() {
  const [selected, setSelected] = useState(1)
  return (
    <section className="shrink-0 bg-[#f1f5fa] pb-2.5 font-['Liberation_Sans',sans-serif] text-[13px]">
      <h2 className="h-7 bg-linear-to-r from-[#f6f9fc] to-[#e6ecf4] pl-[13px] font-['Open_Sans',sans-serif] text-[11px] leading-7 font-bold text-[#2f6db5]">
        Toolpath List
      </h2>
      <div className="mt-[5px] flex gap-[5px] pl-[11px]">
        <ul className="h-[114px] w-[179px] border border-[#777] bg-white pt-0.5">
          {TOOLPATHS.map((path) => (
            <li key={path.id} className="flex h-5 items-start pl-[5px]">
              <Check id={`path-${path.id}`} hiddenLabel={`Show ${path.name}`} initial />
              <svg viewBox="0 0 10 14" className="mr-[3px] ml-1.5 h-3.5 w-2.5" aria-hidden="true">
                <path d="M0 0v13h10V0H7.500v10h-5V0z" fill="#333" />
                <path d="M2.500 0h3v11h-3z" fill="#bbb" />
                <path d="M5.500 0h2v11h-2z" fill="#888" />
              </svg>
              <button type="button" onClick={() => setSelected(path.id)} className={clsx('px-0.5 leading-[19px]', selected === path.id && 'bg-[#f0f0f0]')}>
                {path.name}
              </button>
            </li>
          ))}
        </ul>
        <div className="flex flex-col gap-1.5 pt-[23px]">
          <ListButton label="Move up" disabled>
            <path d="M10 2l6 6h-4v10H8V8H4z" fill="#e2e2e2" stroke="#aaa" />
          </ListButton>
          <ListButton label="Move down">
            <path d="M10 18l6-6h-4V2H8v10H4z" fill="#8fb9ea" stroke="#24497f" strokeWidth="1.300" />
          </ListButton>
          <ListButton label="Toolpath summary">
            <path d="M5 3h10v14H5z" fill="#fff" stroke="#111" strokeWidth="1.600" />
            <path d="M7 6h6M7 9h6M7 12h2M11 12h2M7 14.500h6" stroke="#333" />
          </ListButton>
        </div>
      </div>
      <div className="mt-1.5 flex h-4 items-center pr-[30px] pl-[13px]">
        <Check id="show-2d" label="Show 2D previews" initial />
        <Check id="solid" label="Solid" className="ml-auto" />
      </div>
    </section>
  )
}

function SaveToolpaths() {
  return (
    <section className="min-h-0 flex-1 overflow-hidden bg-[#fdfdfe] text-[11px]">
      <h2 className="flex h-[35px] items-center gap-[13px] bg-linear-to-r from-[#f8f9fb] to-[#e4e8f0] pt-0.5 pl-[13px] font-bold">
        <Icon>
          <path d="M1 1h14v16H1z" fill="#f4f8fd" stroke="#5f88bb" />
          <path d="M5 3h14v16H5z" fill="#2f75c8" stroke="#1c559c" />
          <path d="M7.500 3h9v7h-9z" fill="#fff" />
          <path d="M7.500 3h9v2.500h-9z" fill="#e0533c" />
          <path d="M8 13h8v6H8z" fill="#dce8f6" />
          <path d="M9.500 14h2v4h-2z" fill="#1c4b8c" />
        </Icon>
        Save Toolpaths
      </h2>
      <Check id="one-file" label="Output all visible toolpaths to one file" initial className="mt-2.5 h-[18px] pl-4 font-['Roboto',sans-serif]" />
      <h3 className="mt-1.5 pl-[11px] leading-4 font-bold">Toolpaths to be saved ...</h3>
      <ul className="h-[202px] pl-[22px] font-['Roboto',sans-serif] leading-[14px]">
        {TOOLPATHS.map((path) => (
          <li key={path.id}>
            <div>{path.name}</div>
            <div className="pl-[21px] font-['DejaVu_Sans',sans-serif] text-[9px] leading-[14px] text-[#888]">{path.tool}</div>
            <div className="font-['DejaVu_Sans',sans-serif] text-[9px] leading-[14px] text-[#888]">{path.code}</div>
          </li>
        ))}
      </ul>
      <div className="mr-5 ml-[17px]">
        <hr className="border-[#555]" />
        <label htmlFor="post" className="mt-1 block leading-4 font-bold">Post Processor</label>
        <div className="relative mt-[7px] h-[22px] w-[195px]">
          <select id="post" className="block h-full w-full appearance-none overflow-hidden border border-[#acacac] bg-linear-to-b from-[#f0f0f0] to-[#e5e5e5] pr-5 pl-0.5 font-['Roboto',sans-serif] text-[11px]">
            <option>Shopbot(arcs)(inch)(w/speed)(*.sbp)</option>
          </select>
          <span className="pointer-events-none absolute inset-y-0 right-1 flex items-center"><Chevron d={DOWN} /></span>
        </div>
        <Check id="direct" label="Output direct to machine" initial disabled className="mt-1.5 h-4 pl-0.5 font-['Roboto',sans-serif] text-[#777]" />
        <div className="mt-0.5 flex h-[18px] items-center justify-between pr-1 font-['Roboto',sans-serif] text-[#999]">
          Driver:
          <button type="button" aria-label="Choose driver" disabled className="h-[17px] w-9 border border-[#d5d5d5] bg-[#efefef] leading-[12px]">...</button>
        </div>
        <button type="button" className="mt-[7px] ml-[3px] block h-[22px] w-[192px] border border-[#4a86c8] bg-linear-to-b from-[#f2f3f5] to-[#e3e8f0]">
          Save Toolpath(s) ...
        </button>
        <hr className="mt-[5px] ml-0.5 border-[#555]" />
        <button type="button" className="mt-2 ml-[63px] block h-[22px] w-[73px] border border-[#acacac] bg-[#ebebeb]">Close</button>
      </div>
    </section>
  )
}

function ToolpathsPanel() {
  return (
    <aside className="flex w-[264px] shrink-0 flex-col pl-[5px]">
      <PanelHeader title="Toolpaths" />
      <div className="flex min-h-0 flex-1">
        <div className="flex min-w-0 flex-1 flex-col gap-2.5 border-r-2 border-[#c3d5e3] bg-[#d6e1ea] pt-2.5 pr-px pl-[3px]">
          <ToolpathList />
          <SaveToolpaths />
        </div>
        <div className="flex w-[17px] shrink-0 flex-col items-center bg-[#f0f0f0] pt-1 pb-1">
          <Chevron d={UP} />
          <div className="mt-1 h-[566px] w-4 bg-[#cdcdcd]" />
          <div className="flex-1" />
          <Chevron d={DOWN} />
        </div>
      </div>
    </aside>
  )
}

/* ---------- status bar and taskbar ---------- */

function StatusBar() {
  return (
    <footer className="flex h-5 shrink-0 items-center justify-between bg-[#f0f0f0] pr-[191px] pl-0.5 text-[11px]">
      <span>Ready</span>
      <span>X:542.4922 Y:900.3103</span>
    </footer>
  )
}

function Taskbar() {
  return (
    <div className="flex h-10 shrink-0 items-center bg-linear-to-r from-[#565168] via-[#8c7289] via-55% to-[#6b4860] pl-2.5 text-white">
      <button type="button" aria-label="Start" className="mr-[23px]">
        <svg viewBox="0 0 32 32" className="size-8">
          <path d="M1 6l11-1.700v11H1zM13 4.200L28 2v13.300H13zM1 16.300h11v11L1 25.700zM13 16.300h15V30l-15-2.400z" fill="#fff" />
        </svg>
      </button>
      <button type="button" aria-label="Internet Explorer" className="mr-[30px]">
        <svg viewBox="0 0 32 32" className="size-8">
          <path d="M16 4a12 12 0 0 1 12 14H11.500q.5 5 5 5 3 0 4.500-2h6.500A12 12 0 1 1 16 4zm-4.500 10h9.500q-.5-4.500-4.700-4.500T11.500 14z" fill="#3db4ec" stroke="#1e86c8" strokeWidth=".8" />
          <path d="M30 8q1-7-6-4.500Q12 7 4 19q-4 7-1 9.500 2 1 6-1.500" fill="none" stroke="#f3c026" strokeWidth="2.400" />
        </svg>
      </button>
      <button type="button" aria-label="File Explorer" className="mr-[30px]">
        <svg viewBox="0 0 32 32" className="size-8">
          <path d="M1 4q0-1 1-1h10l2 2h16q1 0 1 1v22H1z" fill="#eccb6b" />
          <path d="M4 4h5v4H4z" fill="#58a857" />
          <path d="M12 6h5v3h-5z" fill="#cf5b4a" />
          <path d="M20 7h6v3h-6z" fill="#5a9bd4" />
          <path d="M1 9h30v19H1z" fill="#f8e39a" />
          <path d="M1 13h30M1 17h30" stroke="#e8cb78" />
          <path d="M6 31V21q0-2 2-2h16q2 0 2 2v10h-5v-6H11v6z" fill="#8dccec" stroke="#4f9cc8" strokeWidth=".8" />
        </svg>
      </button>
      <button type="button" aria-label="Firefox" className="mr-[30px]">
        <svg viewBox="0 0 32 32" className="size-8">
          <circle cx="16" cy="16" r="15" fill="#e66a1f" />
          <circle cx="18" cy="13" r="10.500" fill="#2f6fc0" />
          <path d="M18 3q9 1 10 10l-5-4z" fill="#67b5ea" />
          <path d="M2 11q1-4 4-6 1 3 4 4 3 0 5 1l-4 3q0 3 3 4 4 0 5-1 1 5-5 7 8 3 12-5 2-6-1-11 6 6 4 14-3 9-13 9.500Q2 29 2 11z" fill="#ee8322" />
          <path d="M25 7q6 6 4 14-3 9-13 9 11-3 11-13 0-6-2-10z" fill="#fbc433" />
        </svg>
      </button>
      <button type="button" aria-label="Chrome" className="mr-[17px]">
        <svg viewBox="0 0 32 32" className="size-8">
          <path d="M16 16L3.500 8.800A14.500 14.500 0 0 1 28.500 8.800z" fill="#e0473a" />
          <path d="M16 16L3.500 8.800A14.500 14.500 0 0 0 16 30.500l5-9z" fill="#2ca14f" />
          <path d="M16 9.500h12.900A14.500 14.500 0 0 1 16 30.500l6-11z" fill="#fbc928" />
          <circle cx="16" cy="16" r="6.800" fill="#fff" />
          <circle cx="16" cy="16" r="5.300" fill="#4587f0" />
        </svg>
      </button>
      <button type="button" className="h-10 w-[58px] border border-white/80 bg-[#9599ab] text-[19px] font-bold text-[#2b2b63]">
        PW
      </button>

      <div className="ml-auto flex items-center pr-5">
        <button type="button" aria-label="Show hidden icons" className="mr-[15px]">
          <svg viewBox="0 0 8 8" className="size-2"><path d="M1 6l3-4 3 4z" fill="#fff" /></svg>
        </button>
        <button type="button" aria-label="Network" className="mr-2">
          <Icon className="size-4">
            <path d="M2 2h4v5H2zM4 7v11M7 4h12v9h-7" fill="none" stroke="#fff" strokeWidth="1.800" />
            <rect x="9" y="9" width="10" height="10" fill="#d9383a" />
            <path d="M11.500 11.500l5 5M16.500 11.500l-5 5" stroke="#fff" strokeWidth="1.800" />
          </Icon>
        </button>
        <button type="button" aria-label="Volume" className="mr-5">
          <Icon className="size-4">
            <path d="M2 7h4l5-5v16l-5-5H2z" fill="#fff" />
            <path d="M13.500 6.500q2.500 3.500 0 7M16 4.500q4 5.500 0 11" fill="none" stroke="#ddd" strokeWidth="1.400" />
          </Icon>
        </button>
        <div className="text-center text-[11px] leading-[17px]">
          <div>1:57 PM</div>
          <div>4/7/2017</div>
        </div>
      </div>
    </div>
  )
}

export default function App() {
  return (
    <div className="flex h-screen flex-col overflow-hidden bg-[#f0f0f0] font-['Open_Sans',sans-serif] text-[#111]">
      <TitleBar />
      <MenuBar />
      <div className="flex min-h-0 flex-1">
        <DrawingPanel />
        <DocumentWindow />
        <ToolpathsPanel />
      </div>
      <StatusBar />
      <Taskbar />
    </div>
  )
}
